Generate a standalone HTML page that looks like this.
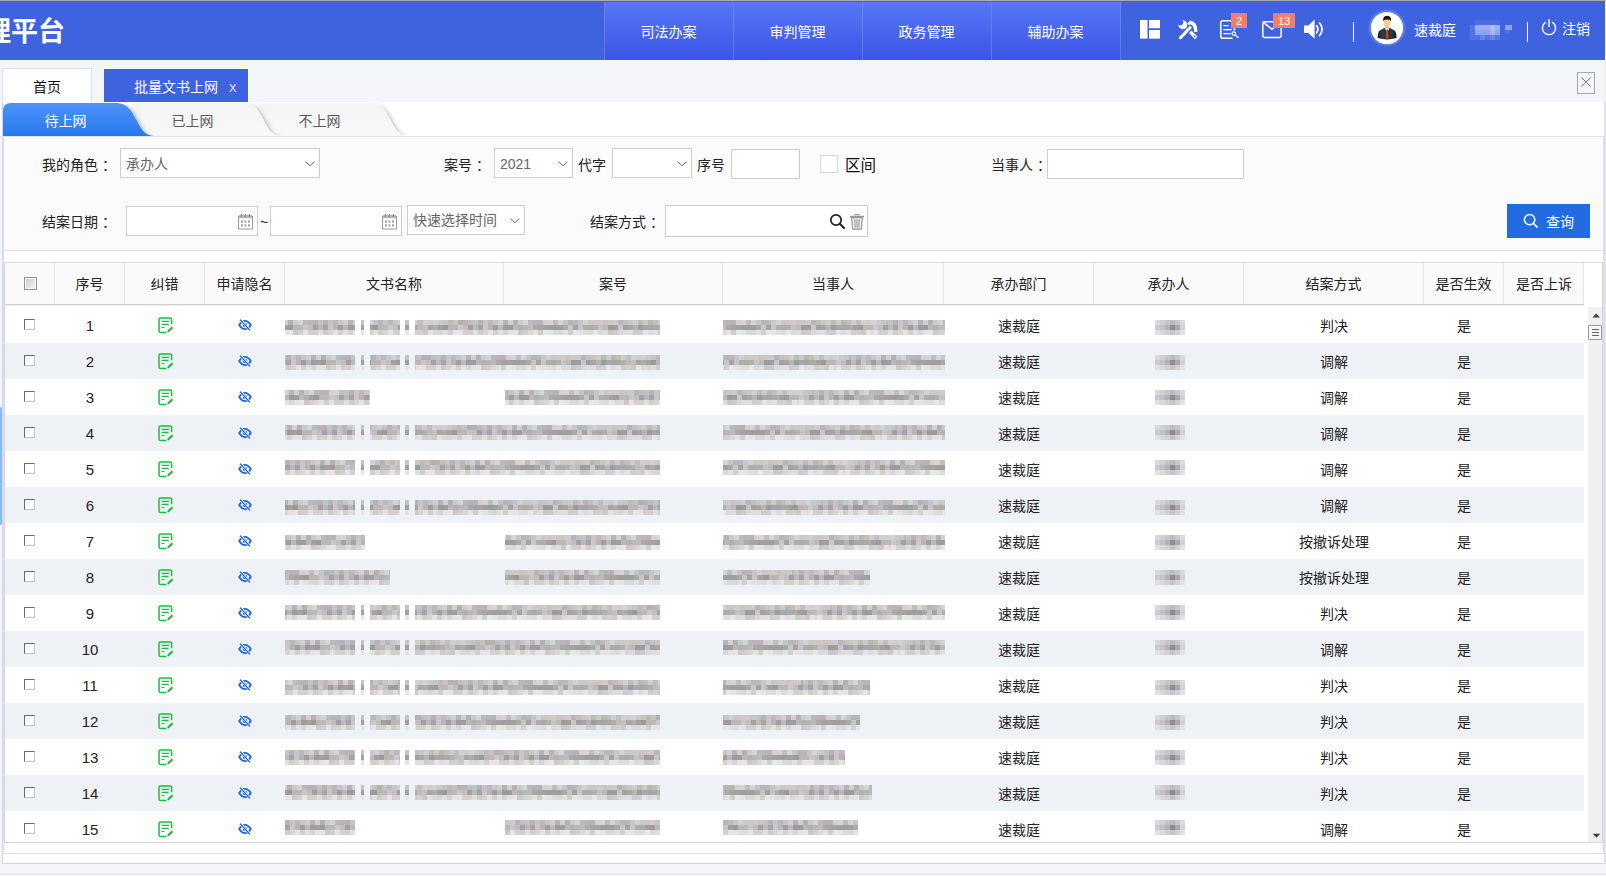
<!DOCTYPE html><html lang="zh-CN"><head><meta charset="utf-8"><title>批量文书上网</title><style>
*{box-sizing:border-box;margin:0;padding:0}
html,body{width:1606px;height:876px;overflow:hidden}
body{position:relative;background:#f4f5f9;font-family:"Liberation Sans","Noto Sans CJK SC",sans-serif;font-size:14px;color:#222}
.a{position:absolute}
.t{position:absolute;white-space:nowrap;line-height:20px;height:20px}
.c{text-align:center}
.inp{position:absolute;background:#fff;border:1px solid #ccc}
.lbl{position:absolute;white-space:nowrap;line-height:20px;height:20px;color:#222}
.row{position:absolute;left:5px;width:1579px;height:36px}
.row.e{background:#eef1f6}
.cell{position:absolute;top:9px;height:20px;line-height:20px;text-align:center;white-space:nowrap;color:#222}
.co{position:relative;left:4px}
.cb{position:absolute;left:19px;top:12px;width:11px;height:11px;background:#fff;border:1px solid;border-color:#6a6a6a #c4c4c4 #c4c4c4 #6a6a6a}
.th{position:absolute;top:0;height:41px;line-height:43px;text-align:center;border-left:1px solid #e6e6e6;color:#222;white-space:nowrap}
.mz{position:absolute;height:16px;overflow:hidden;opacity:.94;margin-top:-.5px}
.nm{position:absolute;width:30px;height:16px;margin-top:-.5px}
.nm i{display:block;height:5.34px}
.mz i{display:block;height:5.34px;width:100%}
.n1{background:linear-gradient(90deg,#d9d9dc 0px,#d9d9dc 5px,#d0d0d4 5px,#d0d0d4 10px,#c6c6ca 10px,#c6c6ca 15px,#bcbcc0 15px,#bcbcc0 20px,#c8c8cc 20px,#c8c8cc 25px,#dadade 25px,#dadade 30px)}
.n2{background:linear-gradient(90deg,#cbcbcf 0px,#cbcbcf 5px,#c1c1c6 5px,#c1c1c6 10px,#b2b2b7 10px,#b2b2b7 15px,#8c8c91 15px,#8c8c91 20px,#a8a8ad 20px,#a8a8ad 25px,#d1d1d5 25px,#d1d1d5 30px)}
.n3{background:linear-gradient(90deg,#e0e0e2 0px,#e0e0e2 5px,#d8d8db 5px,#d8d8db 10px,#d0d0d4 10px,#d0d0d4 15px,#c4c4c8 15px,#c4c4c8 20px,#d2d2d5 20px,#d2d2d5 25px,#e2e2e5 25px,#e2e2e5 30px)}
.m1{background:linear-gradient(90deg,#bfc2c5 0px,#bfc2c5 5px,#adb3ab 5px,#adb3ab 10px,#c9bfc6 10px,#c9bfc6 15px,#b6b6ba 15px,#b6b6ba 20px,#c4c5c2 20px,#c4c5c2 25px,#d2cbd3 25px,#d2cbd3 30px,#b3afb7 30px,#b3afb7 35px,#d4cdcf 35px,#d4cdcf 40px,#b3acad 40px,#b3acad 45px,#c5cac2 45px,#c5cac2 50px,#d1d4d5 50px,#d1d4d5 55px,#b5b6b7 55px,#b5b6b7 60px,#b7afb6 60px,#b7afb6 65px,#b5aeb1 65px,#b5aeb1 70px,#d1cfd0 70px,#d1cfd0 75px,#d5d2d0 75px,#d5d2d0 80px,#babab7 80px,#babab7 85px,#d1d4d2 85px,#d1d4d2 90px,#c5c1c5 90px,#c5c1c5 95px,#aeb4b1 95px,#aeb4b1 100px,#b8b4b8 100px,#b8b4b8 105px,#c3c3cd 105px,#c3c3cd 110px,#d5d0cf 110px,#d5d0cf 115px,#c8c5c6 115px,#c8c5c6 120px,#c7c6c8 120px,#c7c6c8 125px,#d1c7c5 125px,#d1c7c5 130px,#c6c2be 130px,#c6c2be 135px,#cbc5bf 135px,#cbc5bf 140px,#cbc7cd 140px,#cbc7cd 145px,#b7afb1 145px,#b7afb1 150px,#bdbdbf 150px,#bdbdbf 155px,#c9c2c2 155px,#c9c2c2 160px,#cbccc7 160px,#cbccc7 165px,#b7b8b3 165px,#b7b8b3 170px,#c8c8c4 170px,#c8c8c4 175px,#b3b3b2 175px,#b3b3b2 180px,#c1b9b5 180px,#c1b9b5 185px,#d1c9ca 185px,#d1c9ca 190px,#bbbcbf 190px,#bbbcbf 195px,#d0cfcb 195px,#d0cfcb 200px,#d2c8ce 200px,#d2c8ce 205px,#d2d1d0 205px,#d2d1d0 210px,#c3c8ca 210px,#c3c8ca 215px,#c2c4c1 215px,#c2c4c1 220px,#bdb7b5 220px,#bdb7b5 225px,#c7bdbd 225px,#c7bdbd 230px,#b2aaaf 230px,#b2aaaf 235px,#b4aeae 235px,#b4aeae 240px,#bfbbb6 240px,#bfbbb6 245px,#d5d5d8 245px,#d5d5d8 250px,#c7c0bf 250px,#c7c0bf 255px,#cfcecd 255px,#cfcecd 260px,#bdbdbb 260px,#bdbdbb 265px,#c2c4c7 265px,#c2c4c7 270px,#bbb2b4 270px,#bbb2b4 275px,#cfcbd3 275px,#cfcbd3 280px,#cbd2cd 280px,#cbd2cd 285px,#d3d5d8 285px,#d3d5d8 290px,#c2c4ca 290px,#c2c4ca 295px,#bfbec1 295px,#bfbec1 300px,#cecbd0 300px,#cecbd0 305px,#b8babe 305px,#b8babe 310px,#babebc 310px,#babebc 315px,#bfbec9 315px,#bfbec9 320px,#c1bdbb 320px,#c1bdbb 325px,#d4d5d9 325px,#d4d5d9 330px,#c4bfc0 330px,#c4bfc0 335px,#b2b5b0 335px,#b2b5b0 340px,#c1c4c5 340px,#c1c4c5 345px,#d0d6d8 345px,#d0d6d8 350px,#c9bfc7 350px,#c9bfc7 355px,#b6b2b5 355px,#b6b2b5 360px,#bab8b3 360px,#bab8b3 365px,#c9c7cb 365px,#c9c7cb 370px,#b0afae 370px,#b0afae 375px,#acb0b4 375px,#acb0b4 380px,#d4d8da 380px,#d4d8da 385px,#c1c6c5 385px,#c1c6c5 390px,#b1b0bb 390px,#b1b0bb 395px,#d3d9db 395px,#d3d9db 400px)}
.m2{background:linear-gradient(90deg,#9f9b9a 0px,#9f9b9a 5px,#969494 5px,#969494 10px,#b4b5b3 10px,#b4b5b3 15px,#b9b4b1 15px,#b9b4b1 20px,#c5c6c8 20px,#c5c6c8 25px,#bebbbc 25px,#bebbbc 30px,#a19a9f 30px,#a19a9f 35px,#b1b7bb 35px,#b1b7bb 40px,#a59ba6 40px,#a59ba6 45px,#c6c5c4 45px,#c6c5c4 50px,#b8afb5 50px,#b8afb5 55px,#999b9a 55px,#999b9a 60px,#bbb4ba 60px,#bbb4ba 65px,#979696 65px,#979696 70px,#949a98 70px,#949a98 75px,#b4b4b9 75px,#b4b4b9 80px,#aeacac 80px,#aeacac 85px,#b4b4b6 85px,#b4b4b6 90px,#b9b7b7 90px,#b9b7b7 95px,#a8a3a6 95px,#a8a3a6 100px,#a49ea1 100px,#a49ea1 105px,#9e9e9b 105px,#9e9e9b 110px,#9f9799 110px,#9f9799 115px,#98989f 115px,#98989f 120px,#9a9c98 120px,#9a9c98 125px,#a3a7a2 125px,#a3a7a2 130px,#c1c5c5 130px,#c1c5c5 135px,#a59d9b 135px,#a59d9b 140px,#c4c5c2 140px,#c4c5c2 145px,#aca8a9 145px,#aca8a9 150px,#a6a9a3 150px,#a6a9a3 155px,#aeacab 155px,#aeacab 160px,#bec3c1 160px,#bec3c1 165px,#bbb5b8 165px,#bbb5b8 170px,#969794 170px,#969794 175px,#9a9994 175px,#9a9994 180px,#c4c5cc 180px,#c4c5cc 185px,#9f9c9d 185px,#9f9c9d 190px,#a2a1a1 190px,#a2a1a1 195px,#b5b0b2 195px,#b5b0b2 200px,#969993 200px,#969993 205px,#a2a2ac 205px,#a2a2ac 210px,#a2a3a0 210px,#a2a3a0 215px,#a2a79f 215px,#a2a79f 220px,#aeaba8 220px,#aeaba8 225px,#bab7be 225px,#bab7be 230px,#c1bebe 230px,#c1bebe 235px,#a1a2a2 235px,#a1a2a2 240px,#aea7aa 240px,#aea7aa 245px,#c4c4c6 245px,#c4c4c6 250px,#bbb2b3 250px,#bbb2b3 255px,#a7aaa5 255px,#a7aaa5 260px,#919897 260px,#919897 265px,#a5a39e 265px,#a5a39e 270px,#aeb2b5 270px,#aeb2b5 275px,#b8b5b6 275px,#b8b5b6 280px,#a7a6a7 280px,#a7a6a7 285px,#a79ea1 285px,#a79ea1 290px,#a7a8a5 290px,#a7a8a5 295px,#9f9899 295px,#9f9899 300px,#9b9ba3 300px,#9b9ba3 305px,#cccdce 305px,#cccdce 310px,#aca5ac 310px,#aca5ac 315px,#a3a9a3 315px,#a3a9a3 320px,#9fa199 320px,#9fa199 325px,#a6a5a7 325px,#a6a5a7 330px,#a8a4a7 330px,#a8a4a7 335px,#a39f9c 335px,#a39f9c 340px,#aca6ab 340px,#aca6ab 345px,#aaa4a3 345px,#aaa4a3 350px,#b1b1b3 350px,#b1b1b3 355px,#c6c6c9 355px,#c6c6c9 360px,#b6bbb4 360px,#b6bbb4 365px,#a8a6a3 365px,#a8a6a3 370px,#beb7be 370px,#beb7be 375px,#c7c3c8 375px,#c7c3c8 380px,#aca6a7 380px,#aca6a7 385px,#c8c0bd 385px,#c8c0bd 390px,#cdcace 390px,#cdcace 395px,#c5bec3 395px,#c5bec3 400px)}
.m3{background:linear-gradient(90deg,#eae0e9 0px,#eae0e9 5px,#d0cecd 5px,#d0cecd 10px,#d3cdc8 10px,#d3cdc8 15px,#e0e0d7 15px,#e0e0d7 20px,#ccc9ca 20px,#ccc9ca 25px,#d7d3ce 25px,#d7d3ce 30px,#dfe5e4 30px,#dfe5e4 35px,#d0cdc5 35px,#d0cdc5 40px,#e3dfe1 40px,#e3dfe1 45px,#d3d2d9 45px,#d3d2d9 50px,#e5e3dd 50px,#e5e3dd 55px,#e9e2e9 55px,#e9e2e9 60px,#ccc5c2 60px,#ccc5c2 65px,#cfcdd2 65px,#cfcdd2 70px,#ddd5d2 70px,#ddd5d2 75px,#dfe5e1 75px,#dfe5e1 80px,#cacdc9 80px,#cacdc9 85px,#e6e8e7 85px,#e6e8e7 90px,#dfe5df 90px,#dfe5df 95px,#d5dad2 95px,#d5dad2 100px,#dad3d9 100px,#dad3d9 105px,#e1e2de 105px,#e1e2de 110px,#cfcece 110px,#cfcece 115px,#e6e6e2 115px,#e6e6e2 120px,#e5e1ea 120px,#e5e1ea 125px,#dbdedd 125px,#dbdedd 130px,#dadbd8 130px,#dadbd8 135px,#eae6e4 135px,#eae6e4 140px,#d6d9d7 140px,#d6d9d7 145px,#ded9dc 145px,#ded9dc 150px,#c6c5c5 150px,#c6c5c5 155px,#cbc7d1 155px,#cbc7d1 160px,#d7d7d2 160px,#d7d7d2 165px,#e0dadd 165px,#e0dadd 170px,#e0dbde 170px,#e0dbde 175px,#c7cacf 175px,#c7cacf 180px,#cdcdce 180px,#cdcdce 185px,#e6e3eb 185px,#e6e3eb 190px,#ded7e2 190px,#ded7e2 195px,#e2e1db 195px,#e2e1db 200px,#c6cbcb 200px,#c6cbcb 205px,#d3ccce 205px,#d3ccce 210px,#ccc5c4 210px,#ccc5c4 215px,#e5e3e1 215px,#e5e3e1 220px,#d8d7d8 220px,#d8d7d8 225px,#d4d6d6 225px,#d4d6d6 230px,#dbdbe2 230px,#dbdbe2 235px,#cccdd1 235px,#cccdd1 240px,#e8e2e5 240px,#e8e2e5 245px,#dddbd6 245px,#dddbd6 250px,#e7e6e3 250px,#e7e6e3 255px,#d1d3cb 255px,#d1d3cb 260px,#d8d9d7 260px,#d8d9d7 265px,#e8e4ee 265px,#e8e4ee 270px,#e1e0e4 270px,#e1e0e4 275px,#e5e7e4 275px,#e5e7e4 280px,#d6dcd8 280px,#d6dcd8 285px,#eae6ed 285px,#eae6ed 290px,#e9e3e0 290px,#e9e3e0 295px,#d5d7d6 295px,#d5d7d6 300px,#e3e0db 300px,#e3e0db 305px,#c9ced2 305px,#c9ced2 310px,#e8e5dd 310px,#e8e5dd 315px,#cbccca 315px,#cbccca 320px,#e0ddde 320px,#e0ddde 325px,#ccd1d2 325px,#ccd1d2 330px,#d1cdc6 330px,#d1cdc6 335px,#e4e3ee 335px,#e4e3ee 340px,#ccc8d1 340px,#ccc8d1 345px,#d6d7da 345px,#d6d7da 350px,#dddcdb 350px,#dddcdb 355px,#dcd6d8 355px,#dcd6d8 360px,#d4d0cf 360px,#d4d0cf 365px,#e7e9e5 365px,#e7e9e5 370px,#dfd7da 370px,#dfd7da 375px,#e5e9e3 375px,#e5e9e3 380px,#c8c5c0 380px,#c8c5c0 385px,#c5c8ca 385px,#c5c8ca 390px,#dcdedc 390px,#dcdedc 395px,#e1dee1 395px,#e1dee1 400px)}
</style></head><body>
<div class="a" style="left:0;top:0;width:1606px;height:2px;background:linear-gradient(#a9a9a9 50%,#67656a 50%)"></div>
<div class="a" style="left:0;top:2px;width:1605px;height:58px;background:#3f63df"></div>
<div class="a" style="left:1605px;top:2px;width:1px;height:874px;background:#e9e7e8"></div>
<div class="a" style="left:1605px;top:1px;width:1px;height:59px;background:#f4f2ea"></div>
<div class="t" style="left:-16px;top:15px;font-size:27px;font-weight:700;color:#fff;line-height:34px;height:34px;letter-spacing:0">理平台</div>
<div class="a" style="left:604px;top:2px;width:517px;height:58px;background:linear-gradient(#5878f6,#3b54e6)"></div>
<div class="a" style="left:604px;top:2px;width:1px;height:58px;background:rgba(120,150,255,.55)"></div>
<div class="t c" style="left:604px;top:22px;width:129px;color:#fff;font-size:14px">司法办案</div>
<div class="a" style="left:733px;top:2px;width:1px;height:58px;background:rgba(120,150,255,.55)"></div>
<div class="t c" style="left:733px;top:22px;width:129px;color:#fff;font-size:14px">审判管理</div>
<div class="a" style="left:862px;top:2px;width:1px;height:58px;background:rgba(120,150,255,.55)"></div>
<div class="t c" style="left:862px;top:22px;width:129px;color:#fff;font-size:14px">政务管理</div>
<div class="a" style="left:991px;top:2px;width:1px;height:58px;background:rgba(120,150,255,.55)"></div>
<div class="t c" style="left:991px;top:22px;width:129px;color:#fff;font-size:14px">辅助办案</div>
<div class="a" style="left:1120px;top:2px;width:1px;height:58px;background:rgba(120,150,255,.55)"></div>
<svg class="a" style="left:1136px;top:10px" width="200" height="40" viewBox="0 0 200 40">
<g fill="#fff">
<rect x="4" y="10" width="7.5" height="18.6"/><rect x="13" y="10" width="11" height="8.2"/><rect x="13" y="20" width="11" height="8.6"/>
</g>
<g transform="translate(42,10)">
<path d="M0.3,4.5 A4.5,4.5 0 1 0 4.4,0.3 A2.9,2.9 0 0 1 0.3,4.5Z" fill="#fff"/>
<path d="M6.2,6.4 L9.0,9.0" stroke="#fff" stroke-width="3.4" fill="none"/>
<path d="M11.0,13.0 L13.4,10.6 L19.4,16.6 L17.0,19.2Z" fill="#fff"/>
<path d="M4.5,15.6 L12.6,7.1" stroke="#3f63df" stroke-width="5.4" fill="none"/>
<path d="M2.5,17.7 L12.0,7.7" stroke="#fff" stroke-width="3.1" stroke-linecap="round" fill="none"/>
<path d="M11.4,2.2 Q18.4,3.2 17.6,11.8" stroke="#fff" stroke-width="3.5" fill="none"/>
<path d="M9.4,3.6 L12.4,0.6 L14,2.2 L11,5.2Z" fill="#fff"/>
<circle cx="16.6" cy="16.4" r="0.85" fill="#3f63df"/>
</g>
<g transform="translate(84,10)" fill="none" stroke="#fff" stroke-width="1.5" stroke-linecap="round">
<path d="M12,18.2 H2.6 Q0.8,18.2 0.8,16.4 V2.6 Q0.8,0.8 2.6,0.8 H12.6 Q14.4,0.8 14.4,2.6 V10"/>
<path d="M3.8,5.6 H8.2 M3.8,9.6 H11.4 M3.8,13.6 H10.4" stroke-width="1.3"/>
<circle cx="13.8" cy="13.6" r="1.8" stroke-width="1.2"/><path d="M15.2,15 L18.2,17.6" stroke-width="1.3"/>
</g>
<g transform="translate(126,11)" fill="none" stroke="#fff" stroke-width="1.5" stroke-linejoin="round" stroke-linecap="round">
<rect x="0.8" y="0.8" width="18.4" height="15.6" rx="1.6"/>
<path d="M1.6,1.6 L10,8.2 L18.4,1.6"/>
</g>
<g transform="translate(168,9.6)" fill="#fff">
<path d="M0,6 H4.4 L10.6,0 V19.2 L4.4,13.4 H0Z"/>
<path d="M12.6,6.2 Q15.2,9.6 12.6,13.2" fill="none" stroke="#fff" stroke-width="1.7" stroke-linecap="round"/>
<path d="M15.6,3.4 Q20.6,9.6 15.6,16" fill="none" stroke="#fff" stroke-width="1.7" stroke-linecap="round"/>
</g>
</svg>
<div class="a c" style="left:1231px;top:13px;width:16px;height:15px;background:#f27f6b;color:#fff;font-size:11px;line-height:17px;overflow:hidden">2</div>
<div class="a c" style="left:1273px;top:13px;width:22px;height:15px;background:#f27f6b;color:#fff;font-size:11px;line-height:17px;overflow:hidden">13</div>
<div class="a" style="left:1353px;top:22px;width:1.3px;height:20px;background:#fff"></div>
<div class="a" style="left:1527px;top:22px;width:1.3px;height:20px;background:#fff"></div>
<svg class="a" style="left:1367px;top:8px" width="40" height="40" viewBox="0 0 40 40">
<defs><linearGradient id="suit" x1="0" y1="0" x2="1" y2="0"><stop offset="0" stop-color="#16222a"/><stop offset=".3" stop-color="#2e4049"/><stop offset=".5" stop-color="#1a272f"/><stop offset=".7" stop-color="#2b3c45"/><stop offset="1" stop-color="#121c22"/></linearGradient></defs>
<circle cx="20" cy="20" r="18.5" fill="#5b79e6"/>
<circle cx="20" cy="20" r="16.1" fill="#fff"/>
<rect x="18.5" y="17.5" width="3.2" height="4" fill="#e3a06a"/>
<path d="M10.6,30 Q10.8,24 12.6,22.4 L17.6,19.8 L20,23 L22.6,19.8 L27.6,22.4 Q29.4,24 29.6,30 Q20,32.8 10.6,30Z" fill="url(#suit)"/>
<path d="M17.7,19.9 L20.1,25 L22.5,19.9 L20.1,20.8Z" fill="#eef1f2"/>
<path d="M19.2,21.8 H21 L21.5,29.8 L20.1,31.2 L18.8,29.8Z" fill="#e23a17"/>
<path d="M16.6,11.5 Q16.3,16 18.2,18.5 Q20.1,20.1 21.9,18.5 Q23.9,16 23.6,11.5 Q20,10 16.6,11.5Z" fill="#f6c998"/>
<path d="M16.3,13.2 Q15.4,8 20.1,7.7 Q24.8,8 23.9,13.2 Q23.2,11 20.1,11.6 Q17,11 16.3,13.2Z" fill="#15120e"/>
</svg>
<div class="t" style="left:1414px;top:20px;color:#fff">速裁庭</div>
<svg class="a" style="left:1468px;top:18px" width="48" height="24" viewBox="0 0 48 24">
<g fill="#fff">
<rect x="2" y="7" width="30" height="5" opacity=".12"/><rect x="7" y="2" width="25" height="5" opacity=".06"/>
<rect x="7" y="7" width="25" height="10" opacity=".42"/><rect x="2" y="12" width="5" height="5" opacity=".1"/>
<rect x="12" y="12" width="5" height="5" opacity=".3" fill="#6ab0ff"/>
<rect x="22" y="7" width="5" height="10" opacity=".18"/>
<rect x="2" y="17" width="30" height="5" opacity=".1"/><rect x="12" y="17" width="5" height="5" opacity=".12"/><rect x="22" y="17" width="5" height="5" opacity=".12"/>
<rect x="37" y="7" width="7" height="5" opacity=".42"/><rect x="37" y="12" width="5" height="4" opacity=".08"/>
</g></svg>
<svg class="a" style="left:1540px;top:18px" width="18" height="20" viewBox="0 0 18 20">
<path d="M5.6,4.4 A6.6,6.6 0 1 0 12.4,4.4" fill="none" stroke="#fff" stroke-width="1.4" stroke-linecap="round"/>
<path d="M9,1.6 V8.6" stroke="#fff" stroke-width="1.4" stroke-linecap="round"/></svg>
<div class="t" style="left:1562px;top:19px;color:#fff">注销</div>
<div class="a" style="left:0;top:60px;width:1605px;height:42px;background:#f4f5f9"></div>
<div class="a" style="left:2px;top:68px;width:90px;height:35px;background:#fff;border:1px solid #d8defa;border-bottom:none"></div>
<div class="t c" style="left:2px;top:77px;width:90px;color:#111">首页</div>
<div class="a" style="left:104px;top:68px;width:145px;height:34px;background:#3f63df;border-top:1px solid #fff;border-right:1px solid #fff"></div>
<div class="t" style="left:134px;top:77px;color:#fff">批量文书上网</div>
<div class="t" style="left:229px;top:77px;color:#d6daec;font-size:15px">x</div>
<svg class="a" style="left:1577px;top:72px" width="19" height="23" viewBox="0 0 19 23">
<rect x="0.5" y="0.5" width="17" height="21" fill="#f4f5f9" stroke="#a9a9a9"/>
<path d="M4.6,5.6 L13.6,14.6 M13.6,5.6 L4.6,14.6" stroke="#777" stroke-width="1"/></svg>
<div class="a" style="left:0;top:102px;width:1604px;height:35px;background:#fff"></div>
<div class="a" style="left:1604px;top:102px;width:1px;height:762px;background:#d5dbfa"></div>
<div class="a" style="left:2px;top:102px;width:1px;height:762px;background:#cfd6fb"></div>
<div class="a" style="left:0;top:136px;width:1604px;height:1px;background:#e6e2e4"></div>
<svg class="a" style="left:0;top:98px" width="440" height="40" viewBox="0 98 440 40">
<defs><linearGradient id="ga" x1="0" y1="0" x2="0" y2="1"><stop offset="0" stop-color="#4e93fa"/><stop offset="1" stop-color="#2878ef"/></linearGradient>
<linearGradient id="gi" x1="0" y1="0" x2="0" y2="1"><stop offset="0" stop-color="#f4f4f4"/><stop offset="1" stop-color="#f8f8f8"/></linearGradient>
<filter id="sh" x="-10%" y="-20%" width="130%" height="150%"><feDropShadow dx="2.4" dy="2.2" stdDeviation="2.2" flood-color="#000" flood-opacity=".3"/></filter>
<clipPath id="cp"><rect x="0" y="103" width="440" height="33"/></clipPath></defs>
<g clip-path="url(#cp)">
<path d="M257,136 V111 Q257,103 265,103 H369 C383,103 386,112 391,121 C396,131 400,136 409,136Z" fill="url(#gi)" filter="url(#sh)"/>
<path d="M130,136 V111 Q130,103 138,103 H242 C256,103 259,112 264,121 C269,131 273,136 282,136Z" fill="url(#gi)" filter="url(#sh)"/>
<path d="M3,136 V111 Q3,103 11,103 H115 C129,103 132,112 137,121 C142,131 146,136 155,136Z" fill="url(#ga)" filter="url(#sh)"/>
</g></svg>
<div class="t c" style="left:2px;top:111px;width:127px;color:#fff">待上网</div>
<div class="t c" style="left:129px;top:111px;width:127px;color:#5a5a5a">已上网</div>
<div class="t c" style="left:256px;top:111px;width:127px;color:#5a5a5a">不上网</div>
<div class="a" style="left:3px;top:137px;width:1601px;height:717px;background:#fff;border:1px solid #e4dddd;border-top:none;border-bottom-color:#e8dede"></div>
<div class="a" style="left:4px;top:137px;width:1599px;height:113px;background:#fbfbfb"></div>
<div class="a" style="left:4px;top:250px;width:1599px;height:1px;background:#e2e2e2"></div>
<div class="lbl" style="left:42px;top:155px">我的角色<span class="co">：</span></div>
<div class="inp" style="left:120px;top:148px;width:200px;height:30px"><span class="t" style="left:5px;top:5px;color:#666">承办人</span><svg class="a" style="right:3px;top:11px" width="12" height="8" viewBox="0 0 12 8"><path d="M1.8,1.6 L6,5.8 L10.2,1.6" fill="none" stroke="#606060" stroke-width="1"/></svg></div>
<div class="lbl" style="left:444px;top:155px">案号<span class="co">：</span></div>
<div class="inp" style="left:494px;top:148px;width:79px;height:30px"><span class="t" style="left:5px;top:5px;color:#666">2021</span><svg class="a" style="right:3px;top:11px" width="12" height="8" viewBox="0 0 12 8"><path d="M1.8,1.6 L6,5.8 L10.2,1.6" fill="none" stroke="#606060" stroke-width="1"/></svg></div>
<div class="lbl" style="left:578px;top:155px">代字</div>
<div class="inp" style="left:612px;top:148px;width:80px;height:30px"><span class="t" style="left:5px;top:5px;color:#666"></span><svg class="a" style="right:3px;top:11px" width="12" height="8" viewBox="0 0 12 8"><path d="M1.8,1.6 L6,5.8 L10.2,1.6" fill="none" stroke="#606060" stroke-width="1"/></svg></div>
<div class="lbl" style="left:697px;top:155px">序号</div>
<div class="inp" style="left:731px;top:149px;width:69px;height:30px"></div>
<div class="inp" style="left:820px;top:155px;width:18px;height:18px;border-color:#d9d9d9"></div>
<div class="lbl" style="left:845px;top:156px;font-size:15.5px;color:#111">区间</div>
<div class="lbl" style="left:991px;top:155px">当事人<span class="co">：</span></div>
<div class="inp" style="left:1047px;top:149px;width:197px;height:30px"></div>
<div class="lbl" style="left:42px;top:212px">结案日期<span class="co">：</span></div>
<div class="inp" style="left:126px;top:206px;width:132px;height:30px"><svg class="a" style="right:4px;top:6px" width="15" height="17" viewBox="0 0 15 17"><rect x="0.5" y="3.5" width="14" height="12.5" fill="#fff" stroke="#999"/><rect x="1" y="2" width="13" height="3.2" fill="#b5b5b5"/><path d="M3.5,1 V4 M7.5,1 V4 M11.5,1 V4" stroke="#888" stroke-width="1.2"/><g fill="#999"><rect x="3" y="7.6" width="2" height="2"/><rect x="6.5" y="7.6" width="2" height="2"/><rect x="10" y="7.6" width="2" height="2"/><rect x="3" y="11.4" width="2" height="2"/><rect x="6.5" y="11.4" width="2" height="2"/><rect x="10" y="11.4" width="2" height="2"/></g></svg></div>
<div class="lbl" style="left:260px;top:212px;color:#222">~</div>
<div class="inp" style="left:270px;top:206px;width:132px;height:30px"><svg class="a" style="right:4px;top:6px" width="15" height="17" viewBox="0 0 15 17"><rect x="0.5" y="3.5" width="14" height="12.5" fill="#fff" stroke="#999"/><rect x="1" y="2" width="13" height="3.2" fill="#b5b5b5"/><path d="M3.5,1 V4 M7.5,1 V4 M11.5,1 V4" stroke="#888" stroke-width="1.2"/><g fill="#999"><rect x="3" y="7.6" width="2" height="2"/><rect x="6.5" y="7.6" width="2" height="2"/><rect x="10" y="7.6" width="2" height="2"/><rect x="3" y="11.4" width="2" height="2"/><rect x="6.5" y="11.4" width="2" height="2"/><rect x="10" y="11.4" width="2" height="2"/></g></svg></div>
<div class="inp" style="left:407px;top:205px;width:118px;height:30px"><span class="t" style="left:5px;top:4px;color:#666">快速选择时间</span><svg class="a" style="right:3px;top:11px" width="12" height="8" viewBox="0 0 12 8"><path d="M1.8,1.6 L6,5.8 L10.2,1.6" fill="none" stroke="#606060" stroke-width="1"/></svg></div>
<div class="lbl" style="left:590px;top:212px">结案方式<span class="co">：</span></div>
<div class="inp" style="left:665px;top:205px;width:203px;height:32px">
<svg class="a" style="left:163px;top:7px" width="17" height="17" viewBox="0 0 17 17"><circle cx="7" cy="7" r="5.2" fill="none" stroke="#222" stroke-width="1.7"/><path d="M10.8,10.8 L15,15" stroke="#222" stroke-width="2" stroke-linecap="round"/></svg>
<svg class="a" style="left:183px;top:7px" width="16" height="18" viewBox="0 0 16 18"><path d="M1,3.6 H15" stroke="#999" stroke-width="1.6"/><path d="M5.4,2.2 Q8,0.4 10.6,2.2" fill="none" stroke="#999" stroke-width="1.3"/><path d="M2.6,4.6 L3.6,16.2 H12.4 L13.4,4.6Z" fill="#e9e9e9" stroke="#999" stroke-width="1.2"/><path d="M5.8,6.4 L6.2,14.6 M8,6.4 V14.6 M10.2,6.4 L9.8,14.6" stroke="#999" stroke-width="1"/></svg>
</div>
<div class="a" style="left:1507px;top:204px;width:83px;height:34px;background:#236be0">
<svg class="a" style="left:16px;top:9px" width="16" height="16" viewBox="0 0 16 16"><circle cx="6.6" cy="6.6" r="5.2" fill="none" stroke="#fff" stroke-width="1.5"/><path d="M10.4,10.4 L14.4,14.4" stroke="#fff" stroke-width="1.5" stroke-linecap="round"/></svg>
<span class="t" style="left:39px;top:8px;color:#fff">查询</span></div>
<div class="a" style="left:4px;top:262px;width:1599px;height:581px;border:1px solid #d6d6d6;border-top-color:#dcdcdc;background:#fff"></div>
<div class="a" style="left:5px;top:263px;width:1578px;height:41px;background:#fafafa"></div>
<div class="a" style="left:5px;top:304px;width:1579px;height:2px;background:linear-gradient(#d2d2d2 50%,#ececec 50%)"></div>
<div class="th" style="left:5px;top:263px;width:49px;border-left:none"></div>
<div class="th" style="left:54px;top:263px;width:70px">序号</div>
<div class="th" style="left:124px;top:263px;width:80px">纠错</div>
<div class="th" style="left:204px;top:263px;width:80px">申请隐名</div>
<div class="th" style="left:284px;top:263px;width:219px">文书名称</div>
<div class="th" style="left:503px;top:263px;width:219px">案号</div>
<div class="th" style="left:722px;top:263px;width:221px">当事人</div>
<div class="th" style="left:943px;top:263px;width:150px">承办部门</div>
<div class="th" style="left:1093px;top:263px;width:150px">承办人</div>
<div class="th" style="left:1243px;top:263px;width:180px">结案方式</div>
<div class="th" style="left:1423px;top:263px;width:80px">是否生效</div>
<div class="th" style="left:1503px;top:263px;width:81px">是否上诉</div>
<div class="a" style="left:1583px;top:263px;width:1px;height:41px;background:#e6e6e6"></div>
<div class="a" style="left:24px;top:277px;width:13px;height:13px;border:1px solid #8f8f8f;background:#fff;padding:1px"><div style="width:100%;height:100%;background:linear-gradient(135deg,#c9ccd2,#f2f2f2)"></div></div>
<div class="row" style="top:307px;height:36px;overflow:hidden"><div class="cb"></div><div class="cell" style="left:50px;width:70px;font-size:15px">1</div><svg class="a" style="left:153px;top:9.5px" width="16" height="17" viewBox="0 0 16 17"><path d="M7.6,15.6 H2.6 Q1,15.6 1,14 V2.6 Q1,1 2.6,1 H12 Q13.6,1 13.6,2.6 V6.6" fill="none" stroke="#1fb93d" stroke-width="1.5" stroke-linecap="round"/><path d="M3.6,4.3 H11 M3.6,7.4 H10.6 M3.6,10.5 H6.4" stroke="#1fb93d" stroke-width="1.15"/><path d="M9.6,13.4 L13.6,9.4 L15.2,11 L11.2,15 L9.2,15.4Z" fill="#1fb93d"/></svg><svg class="a" style="left:233px;top:12px" width="14" height="12" viewBox="0 0 14 12"><path d="M1.2,6 Q3.8,1.9 7,1.9 Q10.2,1.9 12.8,6 Q10.2,10.1 7,10.1 Q3.8,10.1 1.2,6Z" fill="none" stroke="#2468e0" stroke-width="1.9"/><circle cx="7" cy="6" r="2.3" fill="#2468e0"/><path d="M2.6,0.9 L11.8,11.1" stroke="#fff" stroke-width="2.4"/><path d="M2.4,1.0 L11.6,11.0" stroke="#2468e0" stroke-width="1.2" stroke-linecap="round"/></svg><div class="mz" style="left:280px;top:13px;width:70px"><i class="m1" style="background-position:-37px 0"></i><i class="m2" style="background-position:-72px 0"></i><i class="m3" style="background-position:-52px 0"></i></div><div class="mz" style="left:356px;top:13px;width:3px"><i class="m1" style="background-position:-127px 0"></i><i class="m2" style="background-position:-162px 0"></i><i class="m3" style="background-position:-142px 0"></i></div><div class="mz" style="left:365px;top:13px;width:30px"><i class="m1" style="background-position:-147px 0"></i><i class="m2" style="background-position:-182px 0"></i><i class="m3" style="background-position:-162px 0"></i></div><div class="mz" style="left:400px;top:13px;width:4px"><i class="m1" style="background-position:-77px 0"></i><i class="m2" style="background-position:-112px 0"></i><i class="m3" style="background-position:-92px 0"></i></div><div class="mz" style="left:410px;top:13px;width:245px"><i class="m1" style="background-position:-187px 0"></i><i class="m2" style="background-position:-222px 0"></i><i class="m3" style="background-position:-202px 0"></i></div><div class="mz" style="left:718px;top:13px;width:222px"><i class="m1" style="background-position:-57px 0"></i><i class="m2" style="background-position:-92px 0"></i><i class="m3" style="background-position:-72px 0"></i></div><div class="cell" style="left:939px;width:150px">速裁庭</div><div class="nm" style="left:1150px;top:13px"><i class="n1"></i><i class="n2"></i><i class="n3"></i></div><div class="cell" style="left:1239px;width:180px">判决</div><div class="cell" style="left:1419px;width:80px">是</div></div>
<div class="row e" style="top:343px;height:36px;overflow:hidden"><div class="cb"></div><div class="cell" style="left:50px;width:70px;font-size:15px">2</div><svg class="a" style="left:153px;top:9.5px" width="16" height="17" viewBox="0 0 16 17"><path d="M7.6,15.6 H2.6 Q1,15.6 1,14 V2.6 Q1,1 2.6,1 H12 Q13.6,1 13.6,2.6 V6.6" fill="none" stroke="#1fb93d" stroke-width="1.5" stroke-linecap="round"/><path d="M3.6,4.3 H11 M3.6,7.4 H10.6 M3.6,10.5 H6.4" stroke="#1fb93d" stroke-width="1.15"/><path d="M9.6,13.4 L13.6,9.4 L15.2,11 L11.2,15 L9.2,15.4Z" fill="#1fb93d"/></svg><svg class="a" style="left:233px;top:12px" width="14" height="12" viewBox="0 0 14 12"><path d="M1.2,6 Q3.8,1.9 7,1.9 Q10.2,1.9 12.8,6 Q10.2,10.1 7,10.1 Q3.8,10.1 1.2,6Z" fill="none" stroke="#2468e0" stroke-width="1.9"/><circle cx="7" cy="6" r="2.3" fill="#2468e0"/><path d="M2.6,0.9 L11.8,11.1" stroke="#fff" stroke-width="2.4"/><path d="M2.4,1.0 L11.6,11.0" stroke="#2468e0" stroke-width="1.2" stroke-linecap="round"/></svg><div class="mz" style="left:280px;top:12px;width:70px"><i class="m1" style="background-position:-74px 0"></i><i class="m2" style="background-position:-109px 0"></i><i class="m3" style="background-position:-89px 0"></i></div><div class="mz" style="left:356px;top:12px;width:3px"><i class="m1" style="background-position:-164px 0"></i><i class="m2" style="background-position:-199px 0"></i><i class="m3" style="background-position:-179px 0"></i></div><div class="mz" style="left:365px;top:12px;width:30px"><i class="m1" style="background-position:-184px 0"></i><i class="m2" style="background-position:-219px 0"></i><i class="m3" style="background-position:-199px 0"></i></div><div class="mz" style="left:400px;top:12px;width:4px"><i class="m1" style="background-position:-114px 0"></i><i class="m2" style="background-position:-149px 0"></i><i class="m3" style="background-position:-129px 0"></i></div><div class="mz" style="left:410px;top:12px;width:245px"><i class="m1" style="background-position:-224px 0"></i><i class="m2" style="background-position:-259px 0"></i><i class="m3" style="background-position:-239px 0"></i></div><div class="mz" style="left:718px;top:12px;width:222px"><i class="m1" style="background-position:-94px 0"></i><i class="m2" style="background-position:-129px 0"></i><i class="m3" style="background-position:-109px 0"></i></div><div class="cell" style="left:939px;width:150px">速裁庭</div><div class="nm" style="left:1150px;top:12px"><i class="n1"></i><i class="n2"></i><i class="n3"></i></div><div class="cell" style="left:1239px;width:180px">调解</div><div class="cell" style="left:1419px;width:80px">是</div></div>
<div class="row" style="top:379px;height:36px;overflow:hidden"><div class="cb"></div><div class="cell" style="left:50px;width:70px;font-size:15px">3</div><svg class="a" style="left:153px;top:9.5px" width="16" height="17" viewBox="0 0 16 17"><path d="M7.6,15.6 H2.6 Q1,15.6 1,14 V2.6 Q1,1 2.6,1 H12 Q13.6,1 13.6,2.6 V6.6" fill="none" stroke="#1fb93d" stroke-width="1.5" stroke-linecap="round"/><path d="M3.6,4.3 H11 M3.6,7.4 H10.6 M3.6,10.5 H6.4" stroke="#1fb93d" stroke-width="1.15"/><path d="M9.6,13.4 L13.6,9.4 L15.2,11 L11.2,15 L9.2,15.4Z" fill="#1fb93d"/></svg><svg class="a" style="left:233px;top:12px" width="14" height="12" viewBox="0 0 14 12"><path d="M1.2,6 Q3.8,1.9 7,1.9 Q10.2,1.9 12.8,6 Q10.2,10.1 7,10.1 Q3.8,10.1 1.2,6Z" fill="none" stroke="#2468e0" stroke-width="1.9"/><circle cx="7" cy="6" r="2.3" fill="#2468e0"/><path d="M2.6,0.9 L11.8,11.1" stroke="#fff" stroke-width="2.4"/><path d="M2.4,1.0 L11.6,11.0" stroke="#2468e0" stroke-width="1.2" stroke-linecap="round"/></svg><div class="mz" style="left:280px;top:11px;width:85px"><i class="m1" style="background-position:-111px 0"></i><i class="m2" style="background-position:-146px 0"></i><i class="m3" style="background-position:-126px 0"></i></div><div class="mz" style="left:500px;top:11px;width:155px"><i class="m1" style="background-position:-171px 0"></i><i class="m2" style="background-position:-206px 0"></i><i class="m3" style="background-position:-186px 0"></i></div><div class="mz" style="left:718px;top:11px;width:222px"><i class="m1" style="background-position:-131px 0"></i><i class="m2" style="background-position:-166px 0"></i><i class="m3" style="background-position:-146px 0"></i></div><div class="cell" style="left:939px;width:150px">速裁庭</div><div class="nm" style="left:1150px;top:11px"><i class="n1"></i><i class="n2"></i><i class="n3"></i></div><div class="cell" style="left:1239px;width:180px">调解</div><div class="cell" style="left:1419px;width:80px">是</div></div>
<div class="row e" style="top:415px;height:36px;overflow:hidden"><div class="cb"></div><div class="cell" style="left:50px;width:70px;font-size:15px">4</div><svg class="a" style="left:153px;top:9.5px" width="16" height="17" viewBox="0 0 16 17"><path d="M7.6,15.6 H2.6 Q1,15.6 1,14 V2.6 Q1,1 2.6,1 H12 Q13.6,1 13.6,2.6 V6.6" fill="none" stroke="#1fb93d" stroke-width="1.5" stroke-linecap="round"/><path d="M3.6,4.3 H11 M3.6,7.4 H10.6 M3.6,10.5 H6.4" stroke="#1fb93d" stroke-width="1.15"/><path d="M9.6,13.4 L13.6,9.4 L15.2,11 L11.2,15 L9.2,15.4Z" fill="#1fb93d"/></svg><svg class="a" style="left:233px;top:12px" width="14" height="12" viewBox="0 0 14 12"><path d="M1.2,6 Q3.8,1.9 7,1.9 Q10.2,1.9 12.8,6 Q10.2,10.1 7,10.1 Q3.8,10.1 1.2,6Z" fill="none" stroke="#2468e0" stroke-width="1.9"/><circle cx="7" cy="6" r="2.3" fill="#2468e0"/><path d="M2.6,0.9 L11.8,11.1" stroke="#fff" stroke-width="2.4"/><path d="M2.4,1.0 L11.6,11.0" stroke="#2468e0" stroke-width="1.2" stroke-linecap="round"/></svg><div class="mz" style="left:280px;top:10px;width:70px"><i class="m1" style="background-position:-28px 0"></i><i class="m2" style="background-position:-63px 0"></i><i class="m3" style="background-position:-43px 0"></i></div><div class="mz" style="left:356px;top:10px;width:3px"><i class="m1" style="background-position:-118px 0"></i><i class="m2" style="background-position:-153px 0"></i><i class="m3" style="background-position:-133px 0"></i></div><div class="mz" style="left:365px;top:10px;width:30px"><i class="m1" style="background-position:-138px 0"></i><i class="m2" style="background-position:-173px 0"></i><i class="m3" style="background-position:-153px 0"></i></div><div class="mz" style="left:400px;top:10px;width:4px"><i class="m1" style="background-position:-68px 0"></i><i class="m2" style="background-position:-103px 0"></i><i class="m3" style="background-position:-83px 0"></i></div><div class="mz" style="left:410px;top:10px;width:245px"><i class="m1" style="background-position:-178px 0"></i><i class="m2" style="background-position:-213px 0"></i><i class="m3" style="background-position:-193px 0"></i></div><div class="mz" style="left:718px;top:10px;width:222px"><i class="m1" style="background-position:-48px 0"></i><i class="m2" style="background-position:-83px 0"></i><i class="m3" style="background-position:-63px 0"></i></div><div class="cell" style="left:939px;width:150px">速裁庭</div><div class="nm" style="left:1150px;top:10px"><i class="n1"></i><i class="n2"></i><i class="n3"></i></div><div class="cell" style="left:1239px;width:180px">调解</div><div class="cell" style="left:1419px;width:80px">是</div></div>
<div class="row" style="top:451px;height:36px;overflow:hidden"><div class="cb"></div><div class="cell" style="left:50px;width:70px;font-size:15px">5</div><svg class="a" style="left:153px;top:9.5px" width="16" height="17" viewBox="0 0 16 17"><path d="M7.6,15.6 H2.6 Q1,15.6 1,14 V2.6 Q1,1 2.6,1 H12 Q13.6,1 13.6,2.6 V6.6" fill="none" stroke="#1fb93d" stroke-width="1.5" stroke-linecap="round"/><path d="M3.6,4.3 H11 M3.6,7.4 H10.6 M3.6,10.5 H6.4" stroke="#1fb93d" stroke-width="1.15"/><path d="M9.6,13.4 L13.6,9.4 L15.2,11 L11.2,15 L9.2,15.4Z" fill="#1fb93d"/></svg><svg class="a" style="left:233px;top:12px" width="14" height="12" viewBox="0 0 14 12"><path d="M1.2,6 Q3.8,1.9 7,1.9 Q10.2,1.9 12.8,6 Q10.2,10.1 7,10.1 Q3.8,10.1 1.2,6Z" fill="none" stroke="#2468e0" stroke-width="1.9"/><circle cx="7" cy="6" r="2.3" fill="#2468e0"/><path d="M2.6,0.9 L11.8,11.1" stroke="#fff" stroke-width="2.4"/><path d="M2.4,1.0 L11.6,11.0" stroke="#2468e0" stroke-width="1.2" stroke-linecap="round"/></svg><div class="mz" style="left:280px;top:9px;width:70px"><i class="m1" style="background-position:-65px 0"></i><i class="m2" style="background-position:-100px 0"></i><i class="m3" style="background-position:-80px 0"></i></div><div class="mz" style="left:356px;top:9px;width:3px"><i class="m1" style="background-position:-155px 0"></i><i class="m2" style="background-position:-190px 0"></i><i class="m3" style="background-position:-170px 0"></i></div><div class="mz" style="left:365px;top:9px;width:30px"><i class="m1" style="background-position:-175px 0"></i><i class="m2" style="background-position:-210px 0"></i><i class="m3" style="background-position:-190px 0"></i></div><div class="mz" style="left:400px;top:9px;width:4px"><i class="m1" style="background-position:-105px 0"></i><i class="m2" style="background-position:-140px 0"></i><i class="m3" style="background-position:-120px 0"></i></div><div class="mz" style="left:410px;top:9px;width:245px"><i class="m1" style="background-position:-215px 0"></i><i class="m2" style="background-position:-250px 0"></i><i class="m3" style="background-position:-230px 0"></i></div><div class="mz" style="left:718px;top:9px;width:222px"><i class="m1" style="background-position:-85px 0"></i><i class="m2" style="background-position:-120px 0"></i><i class="m3" style="background-position:-100px 0"></i></div><div class="cell" style="left:939px;width:150px">速裁庭</div><div class="nm" style="left:1150px;top:9px"><i class="n1"></i><i class="n2"></i><i class="n3"></i></div><div class="cell" style="left:1239px;width:180px">调解</div><div class="cell" style="left:1419px;width:80px">是</div></div>
<div class="row e" style="top:487px;height:36px;overflow:hidden"><div class="cb"></div><div class="cell" style="left:50px;width:70px;font-size:15px">6</div><svg class="a" style="left:153px;top:9.5px" width="16" height="17" viewBox="0 0 16 17"><path d="M7.6,15.6 H2.6 Q1,15.6 1,14 V2.6 Q1,1 2.6,1 H12 Q13.6,1 13.6,2.6 V6.6" fill="none" stroke="#1fb93d" stroke-width="1.5" stroke-linecap="round"/><path d="M3.6,4.3 H11 M3.6,7.4 H10.6 M3.6,10.5 H6.4" stroke="#1fb93d" stroke-width="1.15"/><path d="M9.6,13.4 L13.6,9.4 L15.2,11 L11.2,15 L9.2,15.4Z" fill="#1fb93d"/></svg><svg class="a" style="left:233px;top:12px" width="14" height="12" viewBox="0 0 14 12"><path d="M1.2,6 Q3.8,1.9 7,1.9 Q10.2,1.9 12.8,6 Q10.2,10.1 7,10.1 Q3.8,10.1 1.2,6Z" fill="none" stroke="#2468e0" stroke-width="1.9"/><circle cx="7" cy="6" r="2.3" fill="#2468e0"/><path d="M2.6,0.9 L11.8,11.1" stroke="#fff" stroke-width="2.4"/><path d="M2.4,1.0 L11.6,11.0" stroke="#2468e0" stroke-width="1.2" stroke-linecap="round"/></svg><div class="mz" style="left:280px;top:13px;width:70px"><i class="m1" style="background-position:-102px 0"></i><i class="m2" style="background-position:-137px 0"></i><i class="m3" style="background-position:-117px 0"></i></div><div class="mz" style="left:356px;top:13px;width:3px"><i class="m1" style="background-position:-192px 0"></i><i class="m2" style="background-position:-227px 0"></i><i class="m3" style="background-position:-207px 0"></i></div><div class="mz" style="left:365px;top:13px;width:30px"><i class="m1" style="background-position:-212px 0"></i><i class="m2" style="background-position:-247px 0"></i><i class="m3" style="background-position:-227px 0"></i></div><div class="mz" style="left:400px;top:13px;width:4px"><i class="m1" style="background-position:-142px 0"></i><i class="m2" style="background-position:-177px 0"></i><i class="m3" style="background-position:-157px 0"></i></div><div class="mz" style="left:410px;top:13px;width:245px"><i class="m1" style="background-position:-252px 0"></i><i class="m2" style="background-position:-287px 0"></i><i class="m3" style="background-position:-267px 0"></i></div><div class="mz" style="left:718px;top:13px;width:222px"><i class="m1" style="background-position:-122px 0"></i><i class="m2" style="background-position:-157px 0"></i><i class="m3" style="background-position:-137px 0"></i></div><div class="cell" style="left:939px;width:150px">速裁庭</div><div class="nm" style="left:1150px;top:13px"><i class="n1"></i><i class="n2"></i><i class="n3"></i></div><div class="cell" style="left:1239px;width:180px">调解</div><div class="cell" style="left:1419px;width:80px">是</div></div>
<div class="row" style="top:523px;height:36px;overflow:hidden"><div class="cb"></div><div class="cell" style="left:50px;width:70px;font-size:15px">7</div><svg class="a" style="left:153px;top:9.5px" width="16" height="17" viewBox="0 0 16 17"><path d="M7.6,15.6 H2.6 Q1,15.6 1,14 V2.6 Q1,1 2.6,1 H12 Q13.6,1 13.6,2.6 V6.6" fill="none" stroke="#1fb93d" stroke-width="1.5" stroke-linecap="round"/><path d="M3.6,4.3 H11 M3.6,7.4 H10.6 M3.6,10.5 H6.4" stroke="#1fb93d" stroke-width="1.15"/><path d="M9.6,13.4 L13.6,9.4 L15.2,11 L11.2,15 L9.2,15.4Z" fill="#1fb93d"/></svg><svg class="a" style="left:233px;top:12px" width="14" height="12" viewBox="0 0 14 12"><path d="M1.2,6 Q3.8,1.9 7,1.9 Q10.2,1.9 12.8,6 Q10.2,10.1 7,10.1 Q3.8,10.1 1.2,6Z" fill="none" stroke="#2468e0" stroke-width="1.9"/><circle cx="7" cy="6" r="2.3" fill="#2468e0"/><path d="M2.6,0.9 L11.8,11.1" stroke="#fff" stroke-width="2.4"/><path d="M2.4,1.0 L11.6,11.0" stroke="#2468e0" stroke-width="1.2" stroke-linecap="round"/></svg><div class="mz" style="left:280px;top:12px;width:80px"><i class="m1" style="background-position:-19px 0"></i><i class="m2" style="background-position:-54px 0"></i><i class="m3" style="background-position:-34px 0"></i></div><div class="mz" style="left:500px;top:12px;width:155px"><i class="m1" style="background-position:-79px 0"></i><i class="m2" style="background-position:-114px 0"></i><i class="m3" style="background-position:-94px 0"></i></div><div class="mz" style="left:718px;top:12px;width:222px"><i class="m1" style="background-position:-39px 0"></i><i class="m2" style="background-position:-74px 0"></i><i class="m3" style="background-position:-54px 0"></i></div><div class="cell" style="left:939px;width:150px">速裁庭</div><div class="nm" style="left:1150px;top:12px"><i class="n1"></i><i class="n2"></i><i class="n3"></i></div><div class="cell" style="left:1239px;width:180px">按撤诉处理</div><div class="cell" style="left:1419px;width:80px">是</div></div>
<div class="row e" style="top:559px;height:36px;overflow:hidden"><div class="cb"></div><div class="cell" style="left:50px;width:70px;font-size:15px">8</div><svg class="a" style="left:153px;top:9.5px" width="16" height="17" viewBox="0 0 16 17"><path d="M7.6,15.6 H2.6 Q1,15.6 1,14 V2.6 Q1,1 2.6,1 H12 Q13.6,1 13.6,2.6 V6.6" fill="none" stroke="#1fb93d" stroke-width="1.5" stroke-linecap="round"/><path d="M3.6,4.3 H11 M3.6,7.4 H10.6 M3.6,10.5 H6.4" stroke="#1fb93d" stroke-width="1.15"/><path d="M9.6,13.4 L13.6,9.4 L15.2,11 L11.2,15 L9.2,15.4Z" fill="#1fb93d"/></svg><svg class="a" style="left:233px;top:12px" width="14" height="12" viewBox="0 0 14 12"><path d="M1.2,6 Q3.8,1.9 7,1.9 Q10.2,1.9 12.8,6 Q10.2,10.1 7,10.1 Q3.8,10.1 1.2,6Z" fill="none" stroke="#2468e0" stroke-width="1.9"/><circle cx="7" cy="6" r="2.3" fill="#2468e0"/><path d="M2.6,0.9 L11.8,11.1" stroke="#fff" stroke-width="2.4"/><path d="M2.4,1.0 L11.6,11.0" stroke="#2468e0" stroke-width="1.2" stroke-linecap="round"/></svg><div class="mz" style="left:280px;top:11px;width:105px"><i class="m1" style="background-position:-56px 0"></i><i class="m2" style="background-position:-91px 0"></i><i class="m3" style="background-position:-71px 0"></i></div><div class="mz" style="left:500px;top:11px;width:155px"><i class="m1" style="background-position:-116px 0"></i><i class="m2" style="background-position:-151px 0"></i><i class="m3" style="background-position:-131px 0"></i></div><div class="mz" style="left:718px;top:11px;width:147px"><i class="m1" style="background-position:-76px 0"></i><i class="m2" style="background-position:-111px 0"></i><i class="m3" style="background-position:-91px 0"></i></div><div class="cell" style="left:939px;width:150px">速裁庭</div><div class="nm" style="left:1150px;top:11px"><i class="n1"></i><i class="n2"></i><i class="n3"></i></div><div class="cell" style="left:1239px;width:180px">按撤诉处理</div><div class="cell" style="left:1419px;width:80px">是</div></div>
<div class="row" style="top:595px;height:36px;overflow:hidden"><div class="cb"></div><div class="cell" style="left:50px;width:70px;font-size:15px">9</div><svg class="a" style="left:153px;top:9.5px" width="16" height="17" viewBox="0 0 16 17"><path d="M7.6,15.6 H2.6 Q1,15.6 1,14 V2.6 Q1,1 2.6,1 H12 Q13.6,1 13.6,2.6 V6.6" fill="none" stroke="#1fb93d" stroke-width="1.5" stroke-linecap="round"/><path d="M3.6,4.3 H11 M3.6,7.4 H10.6 M3.6,10.5 H6.4" stroke="#1fb93d" stroke-width="1.15"/><path d="M9.6,13.4 L13.6,9.4 L15.2,11 L11.2,15 L9.2,15.4Z" fill="#1fb93d"/></svg><svg class="a" style="left:233px;top:12px" width="14" height="12" viewBox="0 0 14 12"><path d="M1.2,6 Q3.8,1.9 7,1.9 Q10.2,1.9 12.8,6 Q10.2,10.1 7,10.1 Q3.8,10.1 1.2,6Z" fill="none" stroke="#2468e0" stroke-width="1.9"/><circle cx="7" cy="6" r="2.3" fill="#2468e0"/><path d="M2.6,0.9 L11.8,11.1" stroke="#fff" stroke-width="2.4"/><path d="M2.4,1.0 L11.6,11.0" stroke="#2468e0" stroke-width="1.2" stroke-linecap="round"/></svg><div class="mz" style="left:280px;top:10px;width:70px"><i class="m1" style="background-position:-93px 0"></i><i class="m2" style="background-position:-128px 0"></i><i class="m3" style="background-position:-108px 0"></i></div><div class="mz" style="left:356px;top:10px;width:3px"><i class="m1" style="background-position:-183px 0"></i><i class="m2" style="background-position:-218px 0"></i><i class="m3" style="background-position:-198px 0"></i></div><div class="mz" style="left:365px;top:10px;width:30px"><i class="m1" style="background-position:-203px 0"></i><i class="m2" style="background-position:-238px 0"></i><i class="m3" style="background-position:-218px 0"></i></div><div class="mz" style="left:400px;top:10px;width:4px"><i class="m1" style="background-position:-133px 0"></i><i class="m2" style="background-position:-168px 0"></i><i class="m3" style="background-position:-148px 0"></i></div><div class="mz" style="left:410px;top:10px;width:245px"><i class="m1" style="background-position:-243px 0"></i><i class="m2" style="background-position:-278px 0"></i><i class="m3" style="background-position:-258px 0"></i></div><div class="mz" style="left:718px;top:10px;width:222px"><i class="m1" style="background-position:-113px 0"></i><i class="m2" style="background-position:-148px 0"></i><i class="m3" style="background-position:-128px 0"></i></div><div class="cell" style="left:939px;width:150px">速裁庭</div><div class="nm" style="left:1150px;top:10px"><i class="n1"></i><i class="n2"></i><i class="n3"></i></div><div class="cell" style="left:1239px;width:180px">判决</div><div class="cell" style="left:1419px;width:80px">是</div></div>
<div class="row e" style="top:631px;height:36px;overflow:hidden"><div class="cb"></div><div class="cell" style="left:50px;width:70px;font-size:15px">10</div><svg class="a" style="left:153px;top:9.5px" width="16" height="17" viewBox="0 0 16 17"><path d="M7.6,15.6 H2.6 Q1,15.6 1,14 V2.6 Q1,1 2.6,1 H12 Q13.6,1 13.6,2.6 V6.6" fill="none" stroke="#1fb93d" stroke-width="1.5" stroke-linecap="round"/><path d="M3.6,4.3 H11 M3.6,7.4 H10.6 M3.6,10.5 H6.4" stroke="#1fb93d" stroke-width="1.15"/><path d="M9.6,13.4 L13.6,9.4 L15.2,11 L11.2,15 L9.2,15.4Z" fill="#1fb93d"/></svg><svg class="a" style="left:233px;top:12px" width="14" height="12" viewBox="0 0 14 12"><path d="M1.2,6 Q3.8,1.9 7,1.9 Q10.2,1.9 12.8,6 Q10.2,10.1 7,10.1 Q3.8,10.1 1.2,6Z" fill="none" stroke="#2468e0" stroke-width="1.9"/><circle cx="7" cy="6" r="2.3" fill="#2468e0"/><path d="M2.6,0.9 L11.8,11.1" stroke="#fff" stroke-width="2.4"/><path d="M2.4,1.0 L11.6,11.0" stroke="#2468e0" stroke-width="1.2" stroke-linecap="round"/></svg><div class="mz" style="left:280px;top:9px;width:70px"><i class="m1" style="background-position:-10px 0"></i><i class="m2" style="background-position:-45px 0"></i><i class="m3" style="background-position:-25px 0"></i></div><div class="mz" style="left:356px;top:9px;width:3px"><i class="m1" style="background-position:-100px 0"></i><i class="m2" style="background-position:-135px 0"></i><i class="m3" style="background-position:-115px 0"></i></div><div class="mz" style="left:365px;top:9px;width:30px"><i class="m1" style="background-position:-120px 0"></i><i class="m2" style="background-position:-155px 0"></i><i class="m3" style="background-position:-135px 0"></i></div><div class="mz" style="left:400px;top:9px;width:4px"><i class="m1" style="background-position:-50px 0"></i><i class="m2" style="background-position:-85px 0"></i><i class="m3" style="background-position:-65px 0"></i></div><div class="mz" style="left:410px;top:9px;width:245px"><i class="m1" style="background-position:-160px 0"></i><i class="m2" style="background-position:-195px 0"></i><i class="m3" style="background-position:-175px 0"></i></div><div class="mz" style="left:718px;top:9px;width:222px"><i class="m1" style="background-position:-30px 0"></i><i class="m2" style="background-position:-65px 0"></i><i class="m3" style="background-position:-45px 0"></i></div><div class="cell" style="left:939px;width:150px">速裁庭</div><div class="nm" style="left:1150px;top:9px"><i class="n1"></i><i class="n2"></i><i class="n3"></i></div><div class="cell" style="left:1239px;width:180px">调解</div><div class="cell" style="left:1419px;width:80px">是</div></div>
<div class="row" style="top:667px;height:36px;overflow:hidden"><div class="cb"></div><div class="cell" style="left:50px;width:70px;font-size:15px">11</div><svg class="a" style="left:153px;top:9.5px" width="16" height="17" viewBox="0 0 16 17"><path d="M7.6,15.6 H2.6 Q1,15.6 1,14 V2.6 Q1,1 2.6,1 H12 Q13.6,1 13.6,2.6 V6.6" fill="none" stroke="#1fb93d" stroke-width="1.5" stroke-linecap="round"/><path d="M3.6,4.3 H11 M3.6,7.4 H10.6 M3.6,10.5 H6.4" stroke="#1fb93d" stroke-width="1.15"/><path d="M9.6,13.4 L13.6,9.4 L15.2,11 L11.2,15 L9.2,15.4Z" fill="#1fb93d"/></svg><svg class="a" style="left:233px;top:12px" width="14" height="12" viewBox="0 0 14 12"><path d="M1.2,6 Q3.8,1.9 7,1.9 Q10.2,1.9 12.8,6 Q10.2,10.1 7,10.1 Q3.8,10.1 1.2,6Z" fill="none" stroke="#2468e0" stroke-width="1.9"/><circle cx="7" cy="6" r="2.3" fill="#2468e0"/><path d="M2.6,0.9 L11.8,11.1" stroke="#fff" stroke-width="2.4"/><path d="M2.4,1.0 L11.6,11.0" stroke="#2468e0" stroke-width="1.2" stroke-linecap="round"/></svg><div class="mz" style="left:280px;top:13px;width:70px"><i class="m1" style="background-position:-47px 0"></i><i class="m2" style="background-position:-82px 0"></i><i class="m3" style="background-position:-62px 0"></i></div><div class="mz" style="left:356px;top:13px;width:3px"><i class="m1" style="background-position:-137px 0"></i><i class="m2" style="background-position:-172px 0"></i><i class="m3" style="background-position:-152px 0"></i></div><div class="mz" style="left:365px;top:13px;width:30px"><i class="m1" style="background-position:-157px 0"></i><i class="m2" style="background-position:-192px 0"></i><i class="m3" style="background-position:-172px 0"></i></div><div class="mz" style="left:400px;top:13px;width:4px"><i class="m1" style="background-position:-87px 0"></i><i class="m2" style="background-position:-122px 0"></i><i class="m3" style="background-position:-102px 0"></i></div><div class="mz" style="left:410px;top:13px;width:245px"><i class="m1" style="background-position:-197px 0"></i><i class="m2" style="background-position:-232px 0"></i><i class="m3" style="background-position:-212px 0"></i></div><div class="mz" style="left:718px;top:13px;width:147px"><i class="m1" style="background-position:-67px 0"></i><i class="m2" style="background-position:-102px 0"></i><i class="m3" style="background-position:-82px 0"></i></div><div class="cell" style="left:939px;width:150px">速裁庭</div><div class="nm" style="left:1150px;top:13px"><i class="n1"></i><i class="n2"></i><i class="n3"></i></div><div class="cell" style="left:1239px;width:180px">判决</div><div class="cell" style="left:1419px;width:80px">是</div></div>
<div class="row e" style="top:703px;height:36px;overflow:hidden"><div class="cb"></div><div class="cell" style="left:50px;width:70px;font-size:15px">12</div><svg class="a" style="left:153px;top:9.5px" width="16" height="17" viewBox="0 0 16 17"><path d="M7.6,15.6 H2.6 Q1,15.6 1,14 V2.6 Q1,1 2.6,1 H12 Q13.6,1 13.6,2.6 V6.6" fill="none" stroke="#1fb93d" stroke-width="1.5" stroke-linecap="round"/><path d="M3.6,4.3 H11 M3.6,7.4 H10.6 M3.6,10.5 H6.4" stroke="#1fb93d" stroke-width="1.15"/><path d="M9.6,13.4 L13.6,9.4 L15.2,11 L11.2,15 L9.2,15.4Z" fill="#1fb93d"/></svg><svg class="a" style="left:233px;top:12px" width="14" height="12" viewBox="0 0 14 12"><path d="M1.2,6 Q3.8,1.9 7,1.9 Q10.2,1.9 12.8,6 Q10.2,10.1 7,10.1 Q3.8,10.1 1.2,6Z" fill="none" stroke="#2468e0" stroke-width="1.9"/><circle cx="7" cy="6" r="2.3" fill="#2468e0"/><path d="M2.6,0.9 L11.8,11.1" stroke="#fff" stroke-width="2.4"/><path d="M2.4,1.0 L11.6,11.0" stroke="#2468e0" stroke-width="1.2" stroke-linecap="round"/></svg><div class="mz" style="left:280px;top:12px;width:70px"><i class="m1" style="background-position:-84px 0"></i><i class="m2" style="background-position:-119px 0"></i><i class="m3" style="background-position:-99px 0"></i></div><div class="mz" style="left:356px;top:12px;width:3px"><i class="m1" style="background-position:-174px 0"></i><i class="m2" style="background-position:-209px 0"></i><i class="m3" style="background-position:-189px 0"></i></div><div class="mz" style="left:365px;top:12px;width:30px"><i class="m1" style="background-position:-194px 0"></i><i class="m2" style="background-position:-229px 0"></i><i class="m3" style="background-position:-209px 0"></i></div><div class="mz" style="left:400px;top:12px;width:4px"><i class="m1" style="background-position:-124px 0"></i><i class="m2" style="background-position:-159px 0"></i><i class="m3" style="background-position:-139px 0"></i></div><div class="mz" style="left:410px;top:12px;width:245px"><i class="m1" style="background-position:-234px 0"></i><i class="m2" style="background-position:-269px 0"></i><i class="m3" style="background-position:-249px 0"></i></div><div class="mz" style="left:718px;top:12px;width:137px"><i class="m1" style="background-position:-104px 0"></i><i class="m2" style="background-position:-139px 0"></i><i class="m3" style="background-position:-119px 0"></i></div><div class="cell" style="left:939px;width:150px">速裁庭</div><div class="nm" style="left:1150px;top:12px"><i class="n1"></i><i class="n2"></i><i class="n3"></i></div><div class="cell" style="left:1239px;width:180px">判决</div><div class="cell" style="left:1419px;width:80px">是</div></div>
<div class="row" style="top:739px;height:36px;overflow:hidden"><div class="cb"></div><div class="cell" style="left:50px;width:70px;font-size:15px">13</div><svg class="a" style="left:153px;top:9.5px" width="16" height="17" viewBox="0 0 16 17"><path d="M7.6,15.6 H2.6 Q1,15.6 1,14 V2.6 Q1,1 2.6,1 H12 Q13.6,1 13.6,2.6 V6.6" fill="none" stroke="#1fb93d" stroke-width="1.5" stroke-linecap="round"/><path d="M3.6,4.3 H11 M3.6,7.4 H10.6 M3.6,10.5 H6.4" stroke="#1fb93d" stroke-width="1.15"/><path d="M9.6,13.4 L13.6,9.4 L15.2,11 L11.2,15 L9.2,15.4Z" fill="#1fb93d"/></svg><svg class="a" style="left:233px;top:12px" width="14" height="12" viewBox="0 0 14 12"><path d="M1.2,6 Q3.8,1.9 7,1.9 Q10.2,1.9 12.8,6 Q10.2,10.1 7,10.1 Q3.8,10.1 1.2,6Z" fill="none" stroke="#2468e0" stroke-width="1.9"/><circle cx="7" cy="6" r="2.3" fill="#2468e0"/><path d="M2.6,0.9 L11.8,11.1" stroke="#fff" stroke-width="2.4"/><path d="M2.4,1.0 L11.6,11.0" stroke="#2468e0" stroke-width="1.2" stroke-linecap="round"/></svg><div class="mz" style="left:280px;top:11px;width:70px"><i class="m1" style="background-position:-1px 0"></i><i class="m2" style="background-position:-36px 0"></i><i class="m3" style="background-position:-16px 0"></i></div><div class="mz" style="left:356px;top:11px;width:3px"><i class="m1" style="background-position:-91px 0"></i><i class="m2" style="background-position:-126px 0"></i><i class="m3" style="background-position:-106px 0"></i></div><div class="mz" style="left:365px;top:11px;width:30px"><i class="m1" style="background-position:-111px 0"></i><i class="m2" style="background-position:-146px 0"></i><i class="m3" style="background-position:-126px 0"></i></div><div class="mz" style="left:400px;top:11px;width:4px"><i class="m1" style="background-position:-41px 0"></i><i class="m2" style="background-position:-76px 0"></i><i class="m3" style="background-position:-56px 0"></i></div><div class="mz" style="left:410px;top:11px;width:245px"><i class="m1" style="background-position:-151px 0"></i><i class="m2" style="background-position:-186px 0"></i><i class="m3" style="background-position:-166px 0"></i></div><div class="mz" style="left:718px;top:11px;width:122px"><i class="m1" style="background-position:-21px 0"></i><i class="m2" style="background-position:-56px 0"></i><i class="m3" style="background-position:-36px 0"></i></div><div class="cell" style="left:939px;width:150px">速裁庭</div><div class="nm" style="left:1150px;top:11px"><i class="n1"></i><i class="n2"></i><i class="n3"></i></div><div class="cell" style="left:1239px;width:180px">判决</div><div class="cell" style="left:1419px;width:80px">是</div></div>
<div class="row e" style="top:775px;height:36px;overflow:hidden"><div class="cb"></div><div class="cell" style="left:50px;width:70px;font-size:15px">14</div><svg class="a" style="left:153px;top:9.5px" width="16" height="17" viewBox="0 0 16 17"><path d="M7.6,15.6 H2.6 Q1,15.6 1,14 V2.6 Q1,1 2.6,1 H12 Q13.6,1 13.6,2.6 V6.6" fill="none" stroke="#1fb93d" stroke-width="1.5" stroke-linecap="round"/><path d="M3.6,4.3 H11 M3.6,7.4 H10.6 M3.6,10.5 H6.4" stroke="#1fb93d" stroke-width="1.15"/><path d="M9.6,13.4 L13.6,9.4 L15.2,11 L11.2,15 L9.2,15.4Z" fill="#1fb93d"/></svg><svg class="a" style="left:233px;top:12px" width="14" height="12" viewBox="0 0 14 12"><path d="M1.2,6 Q3.8,1.9 7,1.9 Q10.2,1.9 12.8,6 Q10.2,10.1 7,10.1 Q3.8,10.1 1.2,6Z" fill="none" stroke="#2468e0" stroke-width="1.9"/><circle cx="7" cy="6" r="2.3" fill="#2468e0"/><path d="M2.6,0.9 L11.8,11.1" stroke="#fff" stroke-width="2.4"/><path d="M2.4,1.0 L11.6,11.0" stroke="#2468e0" stroke-width="1.2" stroke-linecap="round"/></svg><div class="mz" style="left:280px;top:10px;width:70px"><i class="m1" style="background-position:-38px 0"></i><i class="m2" style="background-position:-73px 0"></i><i class="m3" style="background-position:-53px 0"></i></div><div class="mz" style="left:356px;top:10px;width:3px"><i class="m1" style="background-position:-128px 0"></i><i class="m2" style="background-position:-163px 0"></i><i class="m3" style="background-position:-143px 0"></i></div><div class="mz" style="left:365px;top:10px;width:30px"><i class="m1" style="background-position:-148px 0"></i><i class="m2" style="background-position:-183px 0"></i><i class="m3" style="background-position:-163px 0"></i></div><div class="mz" style="left:400px;top:10px;width:4px"><i class="m1" style="background-position:-78px 0"></i><i class="m2" style="background-position:-113px 0"></i><i class="m3" style="background-position:-93px 0"></i></div><div class="mz" style="left:410px;top:10px;width:245px"><i class="m1" style="background-position:-188px 0"></i><i class="m2" style="background-position:-223px 0"></i><i class="m3" style="background-position:-203px 0"></i></div><div class="mz" style="left:718px;top:10px;width:149px"><i class="m1" style="background-position:-58px 0"></i><i class="m2" style="background-position:-93px 0"></i><i class="m3" style="background-position:-73px 0"></i></div><div class="cell" style="left:939px;width:150px">速裁庭</div><div class="nm" style="left:1150px;top:10px"><i class="n1"></i><i class="n2"></i><i class="n3"></i></div><div class="cell" style="left:1239px;width:180px">判决</div><div class="cell" style="left:1419px;width:80px">是</div></div>
<div class="row" style="top:811px;height:31px;overflow:hidden"><div class="cb"></div><div class="cell" style="left:50px;width:70px;font-size:15px">15</div><svg class="a" style="left:153px;top:9.5px" width="16" height="17" viewBox="0 0 16 17"><path d="M7.6,15.6 H2.6 Q1,15.6 1,14 V2.6 Q1,1 2.6,1 H12 Q13.6,1 13.6,2.6 V6.6" fill="none" stroke="#1fb93d" stroke-width="1.5" stroke-linecap="round"/><path d="M3.6,4.3 H11 M3.6,7.4 H10.6 M3.6,10.5 H6.4" stroke="#1fb93d" stroke-width="1.15"/><path d="M9.6,13.4 L13.6,9.4 L15.2,11 L11.2,15 L9.2,15.4Z" fill="#1fb93d"/></svg><svg class="a" style="left:233px;top:12px" width="14" height="12" viewBox="0 0 14 12"><path d="M1.2,6 Q3.8,1.9 7,1.9 Q10.2,1.9 12.8,6 Q10.2,10.1 7,10.1 Q3.8,10.1 1.2,6Z" fill="none" stroke="#2468e0" stroke-width="1.9"/><circle cx="7" cy="6" r="2.3" fill="#2468e0"/><path d="M2.6,0.9 L11.8,11.1" stroke="#fff" stroke-width="2.4"/><path d="M2.4,1.0 L11.6,11.0" stroke="#2468e0" stroke-width="1.2" stroke-linecap="round"/></svg><div class="mz" style="left:280px;top:9px;width:70px"><i class="m1" style="background-position:-75px 0"></i><i class="m2" style="background-position:-110px 0"></i><i class="m3" style="background-position:-90px 0"></i></div><div class="mz" style="left:500px;top:9px;width:155px"><i class="m1" style="background-position:-135px 0"></i><i class="m2" style="background-position:-170px 0"></i><i class="m3" style="background-position:-150px 0"></i></div><div class="mz" style="left:718px;top:9px;width:135px"><i class="m1" style="background-position:-95px 0"></i><i class="m2" style="background-position:-130px 0"></i><i class="m3" style="background-position:-110px 0"></i></div><div class="cell" style="left:939px;width:150px">速裁庭</div><div class="nm" style="left:1150px;top:9px"><i class="n1"></i><i class="n2"></i><i class="n3"></i></div><div class="cell" style="left:1239px;width:180px">调解</div><div class="cell" style="left:1419px;width:80px">是</div></div>
<div class="a" style="left:1588px;top:307px;width:14px;height:535px;background:#f0f0f0"></div>
<svg class="a" style="left:1588px;top:307px" width="14" height="16" viewBox="0 0 14 16"><path d="M4.4,10.4 L8.2,6.4 L12,10.4Z" fill="#404040"/></svg>
<div class="a" style="left:1588px;top:325px;width:14px;height:15px;background:#f6f6f6;border:1px solid #9a9a9a;border-radius:1px"><div class="a" style="left:3px;top:3px;width:7px;height:7px;background:linear-gradient(#666 0,#666 1px,transparent 1px,transparent 3px,#666 3px,#666 4px,transparent 4px,transparent 6px,#666 6px,#666 7px)"></div></div>
<svg class="a" style="left:1588px;top:826px" width="14" height="16" viewBox="0 0 14 16"><path d="M4.7,7.8 L8.5,11.8 L12.3,7.8Z" fill="#404040"/></svg>
<div class="a" style="left:3px;top:854px;width:1601px;height:9px;background:#fff"></div>
<div class="a" style="left:2px;top:863px;width:1603px;height:1px;background:#cfd6fb"></div>
<div class="a" style="left:0;top:864px;width:1606px;height:10px;background:#f4f5f9"></div>
<div class="a" style="left:0;top:874px;width:1606px;height:1px;background:#e3e3e3"></div>
<div class="a" style="left:0;top:875px;width:1606px;height:1px;background:#fafafa"></div>
<div class="a" style="left:0;top:407px;width:2px;height:118px;background:#8ab9f4;border-radius:0 2px 2px 0"></div>
</body></html>
